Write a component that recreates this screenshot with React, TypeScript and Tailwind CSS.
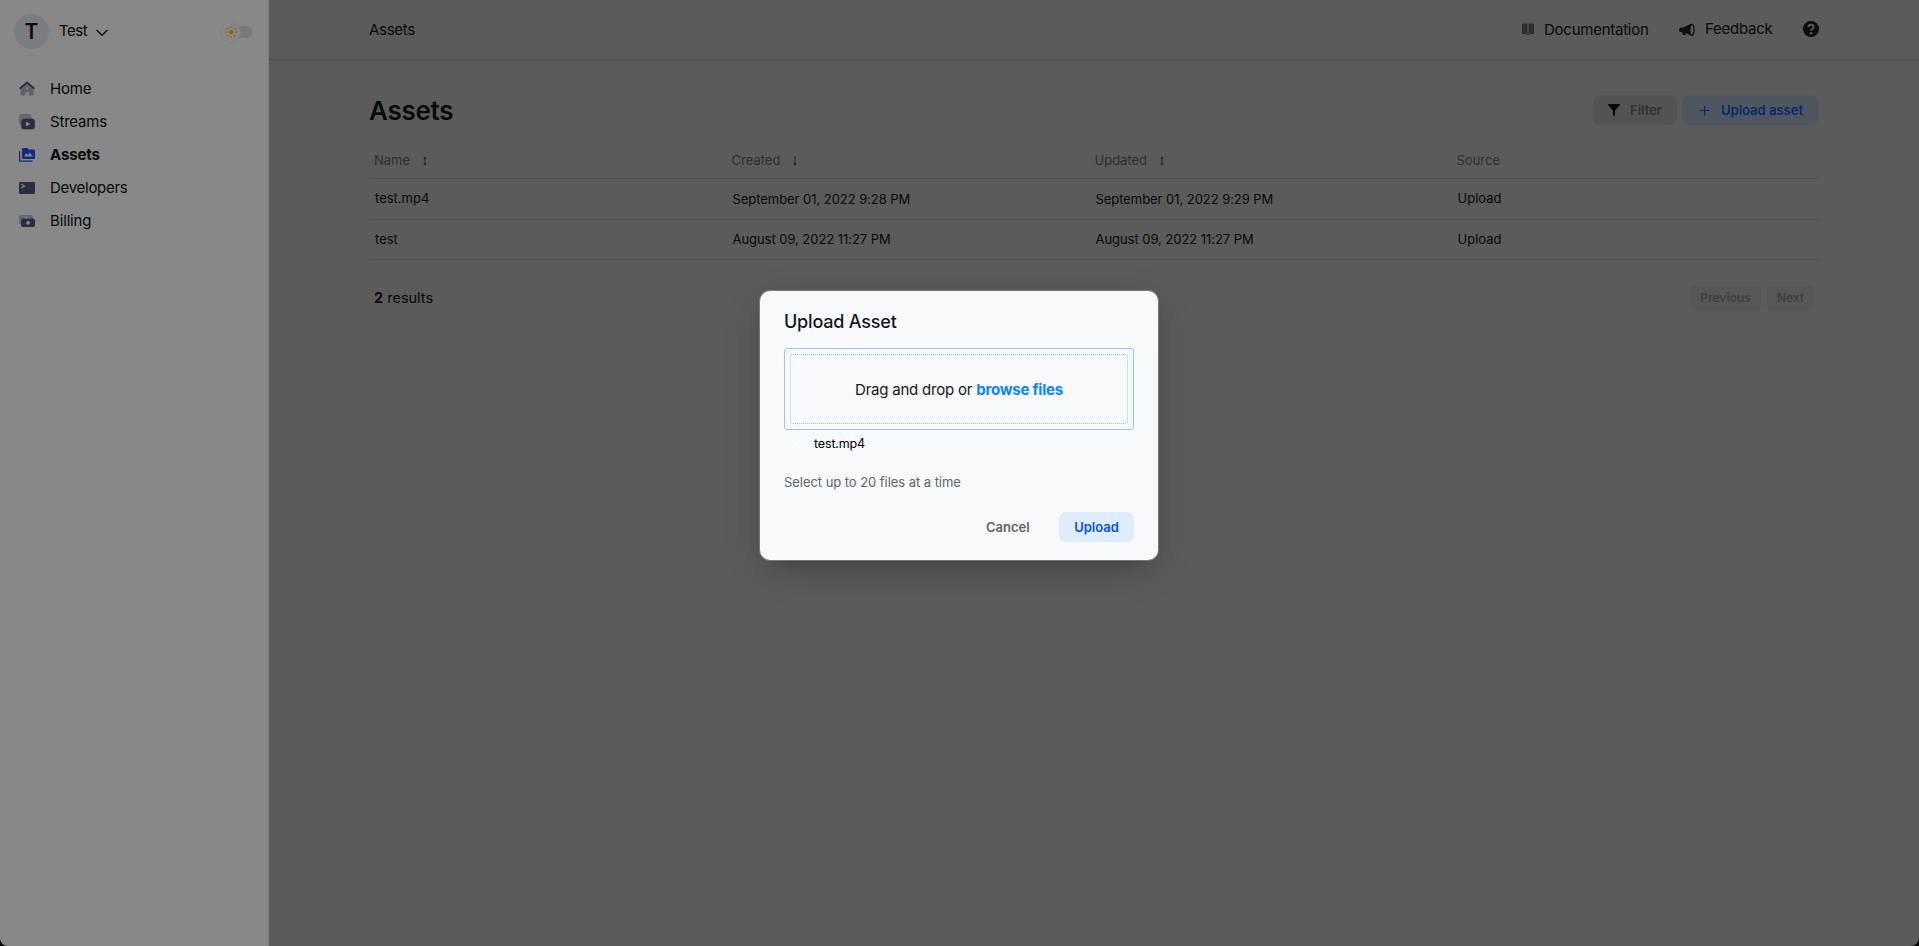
import React from "react";

const NAV = [
  { label: "Home", icon: <HomeIcon />, w: "tracking-[-0.2px]" },
  { label: "Streams", icon: <StreamsIcon />, w: "tracking-[-0.2px]" },
  { label: "Assets", icon: <AssetsIcon />, w: "tracking-[-0.15px] font-bold" },
  { label: "Developers", icon: <TerminalIcon />, w: "tracking-[-0.28px]" },
  { label: "Billing", icon: <BillingIcon />, w: "tracking-[-0.15px]" },
];

function HomeIcon() {
  return (
    <svg width="16" height="16" viewBox="0 0 16 16">
      <path d="M1.500 7 8 2l6.500 5v7.500H10v-3.300H6.400v3.300H1.500z" fill="#5e616d" />
      <rect x="7" y="6.300" width="2" height="2" fill="#888" />
      <path d="M.7 7.600 8 1.500l7.300 6.100" fill="none" stroke="#2b2d3c" strokeWidth="1.800" />
    </svg>
  );
}

function StreamsIcon() {
  return (
    <svg width="16" height="16" viewBox="0 0 16 16">
      <rect x="0" y="0" width="12.5" height="11" rx="3" fill="#646873" />
      <rect x="2" y="4.4" width="14" height="11.2" rx="3.4" fill="#2b2d3c" stroke="#888" strokeWidth=".3" />
      <path d="M7 7.6v5l4.4-2.5z" fill="#888" />
    </svg>
  );
}

function AssetsIcon() {
  return (
    <svg width="16" height="16" viewBox="0 0 16 16">
      <path d="M.6 4v10.2H13.5" fill="none" stroke="#0f2b80" strokeWidth="1.3" />
      <path d="M4.2 1h4l1.5 1.6h5A1.3 1.3 0 0 1 16 3.9v6.8a1.3 1.3 0 0 1-1.3 1.3H4.2A1.3 1.3 0 0 1 3 10.700V2.300A1.300 1.300 0 0 1 4.200 1z" fill="#0f2b80" />
      <path d="M5 9.500 7.300 6l1.600 2.300L10.700 5.500 14 9.500z" fill="#888" />
    </svg>
  );
}

function TerminalIcon() {
  return (
    <svg width="16" height="16" viewBox="0 0 16 16">
      <rect x="0" y="2" width="16" height="12" rx="1.4" fill="#2b2d3c" />
      <path d="M2.200 4.300 5.600 6.200 2.200 8.100" fill="none" stroke="#888" strokeWidth="1.100" />
    </svg>
  );
}

function BillingIcon() {
  return (
    <svg width="16" height="16" viewBox="0 0 16 16">
      <rect x="0" y="2" width="14" height="9" rx="1.500" fill="#646873" />
      <circle cx="7" cy="5" r="1.300" fill="#888" />
      <rect x="2" y="5.500" width="14" height="8.500" rx="1.800" fill="#2b2d3c" />
      <circle cx="9" cy="9.800" r="1.900" fill="#888" />
    </svg>
  );
}

function Sun() {
  return (
    <svg width="12" height="12" viewBox="0 0 12 12" fill="#946413">
      <circle cx="6" cy="6" r="2.300" />
      {[0, 45, 90, 135, 180, 225, 270, 315].map((a) => (
        <circle key={a} cx="6" cy="1" r=".9" transform={`rotate(${a} 6 6)`} />
      ))}
    </svg>
  );
}

function SortIcon({ down = false }: { down?: boolean }) {
  return (
    <svg width="6" height="10" viewBox="0 0 6 10" fill="none" stroke="#242628" strokeWidth="1">
      <path d={down ? "M3 0v9" : "M3 1v8"} />
      <path d="M1.200 7.300h3.600L3 9.700z" fill="#242628" stroke="none" />
      {!down && <path d="M1.200 2.700h3.600L3 .3z" fill="#242628" stroke="none" />}
    </svg>
  );
}

function Sidebar() {
  return (
    <aside className="flex w-[269px] shrink-0 flex-col border-r border-[#7d7d7d] bg-[#888888]">
      <div className="flex h-[72px] items-start pt-[14px] pl-[14px]">
        <div className="flex size-[35px] items-center justify-center rounded-full bg-[#7b7d80] pt-px text-[21px] font-semibold text-[#0b0d0e]">
          T
        </div>
        <span className="ml-[10px] mt-[6px] w-[37px] text-[15px] leading-[22px] tracking-[-0.5px]">Test</span>
        <svg className="mt-[15px]" width="12" height="8" viewBox="0 0 12 8" fill="none" stroke="#0d0f10" strokeWidth="1.400">
          <path d="M.5 1 6 6.300 11.500 1" />
        </svg>
        <div className="ml-[112px] mt-[7px] flex h-[22px] items-center">
          <div className="z-10 flex size-[21px] items-center justify-center rounded-full border border-[#808183] bg-[#888888]">
            <Sun />
          </div>
          <div className="-ml-[8px] h-[12px] w-[20px] rounded-r-full bg-[#76787b]" />
        </div>
      </div>
      <nav className="flex flex-col">
        {NAV.map((n) => (
          <a key={n.label} className="flex h-[33px] items-center pl-[19px] text-[15px]">
            {n.icon}
            <span className={`ml-[15px] pt-[2px] whitespace-nowrap ${n.w}`}>{n.label}</span>
          </a>
        ))}
      </nav>
    </aside>
  );
}

function Header() {
  return (
    <header className="flex h-[60px] items-center border-b border-[#4c4c4d] pr-[100px] pl-[100px] text-[15px]">
      <span className="pt-[2px] tracking-[-0.3px]">Assets</span>
      <div className="ml-auto flex items-center">
        <svg className="mb-px" width="12" height="12" viewBox="0 0 12 12" fill="#2c2e30">
          <path d="M0 .5h4.500q1 0 1 1v9.500H0zM12 .5H7.500q-1 0-1 1v9.500H12zM4.500 11h3v1h-3z" />
        </svg>
        <span className="ml-[10px] w-[135px] pt-[2px] tracking-[-0.25px]">Documentation</span>
        <svg width="16" height="14" viewBox="0 0 16 14">
          <path d="M12.500 0.500 4 4.500H2Q0 4.800 0 7T2 9h1l1 3h2.600L6.500 9.700l6 3z" fill="#0b0d0e" />
          <ellipse cx="12.900" cy="6.800" rx="2.100" ry="5.500" fill="#5b5b5b" stroke="#0b0d0e" strokeWidth="1.300" />
        </svg>
        <span className="ml-[10px] w-[98px] tracking-[-0.25px]">Feedback</span>
        <svg className="mb-px" width="16" height="16" viewBox="0 0 16 16">
          <circle cx="8" cy="8" r="8" fill="#0b0d0e" />
          <path d="M5.300 6.200Q5.500 3.700 8.100 3.700T10.700 6Q10.700 7.200 9.400 7.900 8.100 8.600 8.100 9.800" fill="none" stroke="#5b5b5b" strokeWidth="1.900" />
          <circle cx="8.100" cy="12.200" r="1.200" fill="#5b5b5b" />
        </svg>
      </div>
    </header>
  );
}

const ROWS = [
  ["test.mp4", "September 01, 2022 9:28 PM", "September 01, 2022 9:29 PM", "h-[41px]", "pt-[2px]"],
  ["test", "August 09, 2022 11:27 PM", "August 09, 2022 11:27 PM", "h-[40px]", "pt-0"],
];

function AssetTable() {
  return (
    <div className="mt-[18px] text-[13px]">
      <div className="grid h-[36px] grid-cols-[357.500px_363px_362px_1fr] items-center border-b border-[#505152] pl-[5px] text-[#2c2f31]">
        <div className="flex items-center gap-[12px]">Name <SortIcon /></div>
        <div className="flex items-center gap-[12px]">Created <SortIcon down /></div>
        <div className="flex items-center gap-[12px]">Updated <SortIcon /></div>
        <div>Source</div>
      </div>
      {ROWS.map(([name, created, updated, h, pad]) => (
        <div key={name} className={`grid grid-cols-[357.500px_363px_362px_1fr] items-center border-b border-[#505152] pl-[6px] ${h}`}>
          <div>{name}</div>
          <div className={`tracking-[-0.05px] ${pad}`}>{created}</div>
          <div className={`tracking-[-0.05px] ${pad}`}>{updated}</div>
          <div>Upload</div>
        </div>
      ))}
    </div>
  );
}

function UploadDialog() {
  return (
    <div className="absolute top-[291px] left-[760px] flex h-[269px] w-[398px] flex-col rounded-[10px] bg-[#f8f9fa] px-[24px] text-[#11181c] shadow-[0_0_0_1px_rgba(160,160,160,0.5),0_10px_38px_-10px_rgba(14,18,22,0.35),0_10px_20px_-15px_rgba(14,18,22,0.4)]">
      <h2 className="mt-[18px] h-[39px] text-[18px] leading-[26px] font-medium tracking-[-0.2px]">Upload Asset</h2>
      <div className="h-[82px] rounded-[3px] border border-[#96c7f2] p-[5px]">
        <div className="flex h-full items-center justify-center rounded-[3px] border border-dotted border-[#96c7f2] pt-[2px] text-[15px]">
          <span className="whitespace-nowrap tracking-[-0.22px]">Drag and drop or <b className="font-bold text-[#0a84ff]">browse files</b></span>
        </div>
      </div>
      <div className="flex h-[27px] items-center pl-[8px] text-[12.500px] text-black">
        <svg width="9" height="9" viewBox="0 0 9 9" stroke="#ffffff" strokeWidth="1.200"><path d="M.5.500l8 8M8.500.500l-8 8" /></svg>
        <span className="ml-[13px] pt-px tracking-[-0.15px]">test.mp4</span>
      </div>
      <p className="mt-[15px] h-[40px] text-[13px] leading-[20px] tracking-[-0.050px] text-[#60666a]">Select up to 20 files at a time</p>
      <div className="flex items-center justify-end text-[13px] font-semibold">
        <button className="w-[73px] pt-[2px] text-left text-[#60666a]">Cancel</button>
        <button className="h-[30px] w-[75px] rounded-[7px] bg-[#deecfd] pt-[2px] text-[#0954d1]">Upload</button>
      </div>
    </div>
  );
}

export default function App() {
  return (
    <div className="relative h-[946px] w-full overflow-hidden bg-black font-['Inter',sans-serif] text-[#07090a]">
      <div className="flex h-full overflow-hidden rounded-b-[8px] bg-[#5b5b5b]">
        <Sidebar />
        <main className="min-w-0 flex-1">
          <Header />
          <section className="pr-[100px] pl-[100px]">
            <div className="flex items-center pt-[35px]">
              <h1 className="pt-[2px] text-[26px] leading-[28px] font-semibold tracking-[-0.3px]">Assets</h1>
              <div className="ml-auto flex gap-[5px] text-[13px] font-semibold">
                <button className="flex h-[30px] w-[84px] items-center rounded-[8px] bg-[#525353] pl-[15px] text-[#303234]">
                  <svg width="12" height="12" viewBox="0 0 12 12" fill="#000"><path d="M.5 0h11q.6.600 0 1.500L7 6.500V12L5 11V6.500L.5 1.500Q0 .6.500 0z" /></svg>
                  <span className="ml-[10px] pt-[2px]">Filter</span>
                </button>
                <button className="flex h-[30px] w-[137px] items-center rounded-[8px] bg-[#50565f] pl-[17px] text-[#07296b]">
                  <svg width="11" height="11" viewBox="0 0 11 11" stroke="#07296b" strokeWidth="1.100"><path d="M5.500.5v10M.5 5.500h10" /></svg>
                  <span className="ml-[11px] pt-[2px] whitespace-nowrap">Upload asset</span>
                </button>
              </div>
            </div>
            <AssetTable />
            <div className="mt-[25px] flex h-[26px] items-center pr-[5px] pl-[5px]">
              <span className="text-[14.500px]"><b className="font-bold">2</b> results</span>
              <div className="ml-auto flex gap-[6px] text-[12px] font-semibold text-[#3d3f40]">
                <button className="h-[25px] w-[71px] rounded-[5px] bg-[#565757]">Previous</button>
                <button className="h-[25px] w-[47px] rounded-[5px] bg-[#565757]">Next</button>
              </div>
            </div>
          </section>
        </main>
      </div>
      <UploadDialog />
    </div>
  );
}
